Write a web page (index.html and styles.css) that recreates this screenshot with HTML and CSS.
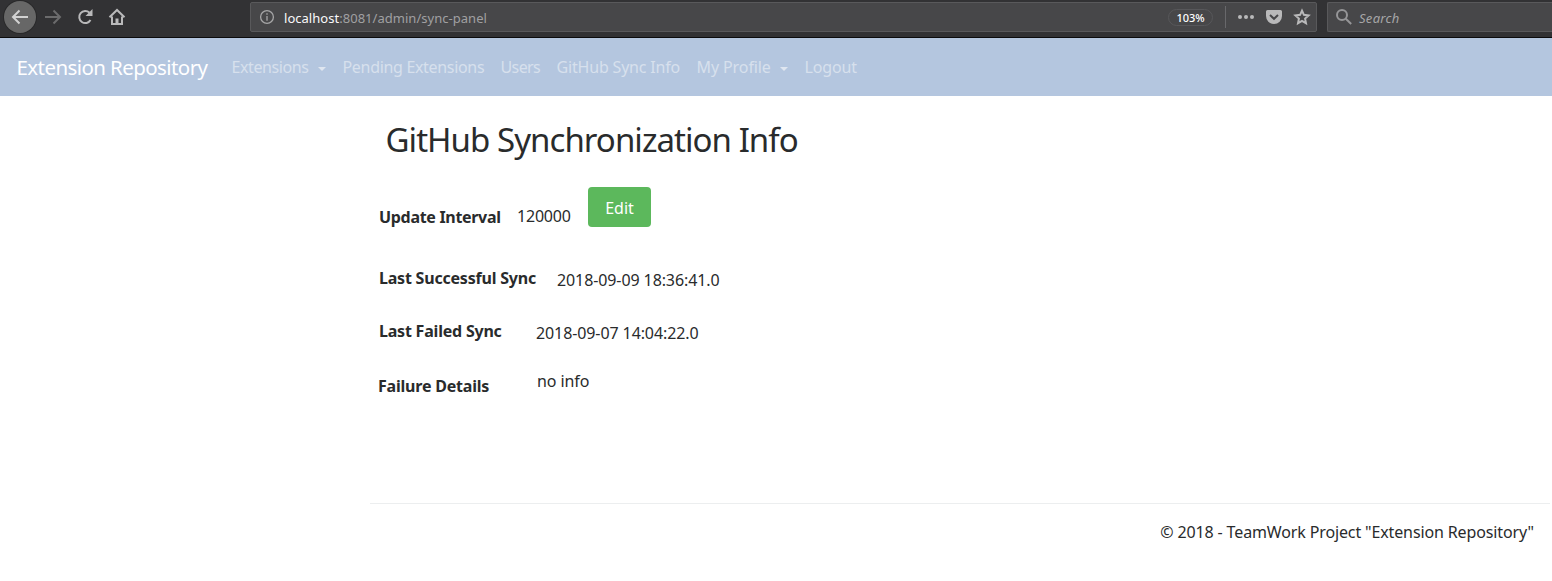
FILE: index.html
```html
<!DOCTYPE html>
<html lang="en">
<head>
<meta charset="utf-8">
<title>Extension Repository</title>
<link rel="stylesheet" href="styles.css">
</head>
<body>
<div class="browser">
  <div class="nav-buttons">
    <span class="back"><svg width="18" height="18" viewBox="0 0 18 18"><path d="M17 9H2.500M8.500 2.500L2 9l6.500 6.500"/></svg></span>
    <svg class="forward" width="18" height="18" viewBox="0 0 18 18"><path d="M1 9h14.500M9.500 2.500L16 9l-6.500 6.500"/></svg>
    <svg class="reload" width="18" height="18" viewBox="0 0 18 18"><path d="M13.500 4.800A6 6 0 1 0 14.500 12"/><path class="solid" d="M16.500 1v7h-7z"/></svg>
    <svg class="home" width="18" height="18" viewBox="0 0 18 18"><path d="M1.500 9.200L9 2l7.500 7.200M4 8.500V16h10V8.500"/><path d="M9 16v-5.500" class="door"/></svg>
  </div>
  <div class="urlbar">
    <svg class="info" width="16" height="16" viewBox="0 0 16 16"><circle cx="8" cy="8" r="6.400"/><path d="M8 7v4.700M8 4.200v1.600"/></svg>
    <span class="url"><b>localhost</b>:8081/admin/sync-panel</span>
    <span class="zoom">103%</span>
    <span class="divider"></span>
    <svg class="dots" width="18" height="18" viewBox="0 0 18 18"><circle cx="3" cy="9" r="2"/><circle cx="9" cy="9" r="2"/><circle cx="15" cy="9" r="2"/></svg>
    <svg class="pocket" width="16" height="16" viewBox="0 0 16 16"><path class="solid" d="M1.500 1h13A1.500 1.500 0 0 1 16 2.500V7A8 8 0 0 1 0 7V2.500A1.500 1.500 0 0 1 1.500 1z"/><path class="check" d="M4 6l4 3.800L12 6"/></svg>
    <svg class="star" width="18" height="18" viewBox="0 0 18 18"><path d="M9 2.600l1.900 4.200 4.700.6-3.500 3.200.9 4.600L9 12.900l-4 2.300.9-4.600-3.500-3.200 4.700-.6z"/></svg>
  </div>
  <div class="searchbar">
    <svg width="18" height="18" viewBox="0 0 18 18"><circle cx="7" cy="7" r="5"/><path d="M10.800 10.800L16.200 16"/></svg>
    <span>Search</span>
  </div>
</div>
<nav class="navbar">
  <a class="brand">Extension Repository</a>
  <a class="link extensions">Extensions<i class="caret"></i></a>
  <a class="link pending">Pending Extensions</a>
  <a class="link users">Users</a>
  <a class="link sync">GitHub Sync Info</a>
  <a class="link profile">My Profile<i class="caret"></i></a>
  <a class="link logout">Logout</a>
</nav>
<main class="content">
  <h2>GitHub Synchronization Info</h2>
  <div class="row interval"><b>Update Interval</b><span>120000</span><button>Edit</button></div>
  <div class="row success"><b>Last Successful Sync</b><span>2018-09-09 18:36:41.0</span></div>
  <div class="row failed"><b>Last Failed Sync</b><span>2018-09-07 14:04:22.0</span></div>
  <div class="row details"><b>Failure Details</b><span>no info</span></div>
  <footer>© 2018 - TeamWork Project "Extension Repository"</footer>
</main>
</body>
</html>
```
FILE: styles.css
```css
* { box-sizing: border-box; }
body { margin: 0; height: 581px; overflow: hidden; background: #fff; color: #292b2c; font: 16px/24px "Noto Sans", "Open Sans", sans-serif; white-space: nowrap; }
svg { display: block; flex: none; fill: none; stroke: #b9b9ba; stroke-width: 2; }
.browser { display: flex; height: 38px; background: #323234; border-bottom: 1px solid #0c0c0d; }
.nav-buttons { display: flex; width: 250px; height: 34px; padding-left: 4px; align-items: center; flex: none; }
.back { display: flex; width: 32px; height: 32px; border-radius: 50%; background: #676767; align-items: center; justify-content: center; box-shadow: 0 0 0 1px #29292a; }
.back svg { stroke: #d2d2d2; }
.forward { margin-left: 8px; stroke: #6b6b6c; }
.reload { margin-left: 14px; }
.home { margin-left: 14px; }
.solid { fill: #b9b9ba; stroke: none; }
.door { stroke-width: 3; }
.urlbar, .searchbar { display: flex; align-items: center; height: 30px; margin-top: 2px; border: 1px solid #59595b; background: #474749; border-radius: 2px; }
.urlbar { width: 1067px; flex: none; padding-left: 8px; }
.info { stroke: #a6a6a7; stroke-width: 1.300; }
.url { width: 884px; margin-left: 9px; padding-top: 2px; font-size: 13px; letter-spacing: .03px; color: #a0a0a2; }
.url b { color: #f9f9fa; font-weight: 400; }
.zoom { width: 45px; height: 17px; border: 1px solid #57575a; border-radius: 9px; font-size: 11px; line-height: 16px; font-weight: 500; text-align: center; color: #fff; }
.divider { width: 1px; height: 22px; margin-left: 12px; background: #68686b; }
.dots { margin-left: 11px; fill: #b9b9ba; stroke: none; }
.pocket { margin-left: 11px; }
.pocket .check { stroke: #474749; }
.star { margin-left: 11px; }
.searchbar { flex: 1; margin-left: 10px; padding-left: 7px; border-right: 0; border-radius: 2px 0 0 2px; font-size: 13px; font-style: italic; color: #a6a6a7; }
.searchbar svg { stroke: #969698; }
.searchbar span { margin-left: 6px; padding-top: 2px; letter-spacing: .3px; }
.navbar { display: flex; align-items: center; height: 58px; padding-left: 16.500px; background: #b4c6df; }
.brand { width: 215px; font-size: 20.500px; letter-spacing: -.58px; color: #fff; }
.link { color: #d7e0ed; }
.caret { display: inline-block; margin-left: 9px; vertical-align: 2px; border: 4px solid transparent; border-top-color: #dfe6f0; border-bottom: 0; }
.extensions { width: 111px; letter-spacing: -.4px; }
.pending { width: 158px; letter-spacing: -.32px; }
.users { width: 56px; letter-spacing: -.6px; }
.sync { width: 140px; letter-spacing: -.18px; }
.profile { width: 108px; letter-spacing: -.1px; }
.logout { letter-spacing: -.15px; }
.content { width: 1180px; margin-left: 370px; }
h2 { margin: 0; padding: 24px 0 0 15.500px; height: 91px; font-size: 33px; line-height: 40px; font-weight: 400; letter-spacing: -.95px; }
.row { display: flex; align-items: flex-start; padding-left: 9px; letter-spacing: -.1px; }
.row b { letter-spacing: -.21px; }
.interval { height: 79px; padding-top: 17px; }
.row.interval b { width: 138px; padding-top: 1px; letter-spacing: -.31px; }
.interval span { width: 71px; letter-spacing: -.2px; }
.interval button { width: 63px; height: 40px; margin-top: -17px; padding: 2px 0 0; border: 0; border-radius: 4px; background: #5cb85c; color: #fff; font: inherit; }
.success { height: 53px; }
.success b { width: 178px; }
.row span { padding-top: 2px; }
.row.interval span { padding-top: 0; }
.failed { height: 50px; }
.failed b { width: 157px; }
.details { height: 134px; padding-left: 8px; }
.details b { width: 159px; margin-top: 5px; }
.row.details span { padding-top: 0; }
footer { padding: 16px 16px 0 0; border-top: 1px solid #eceeef; text-align: right; letter-spacing: -.13px; }
```
